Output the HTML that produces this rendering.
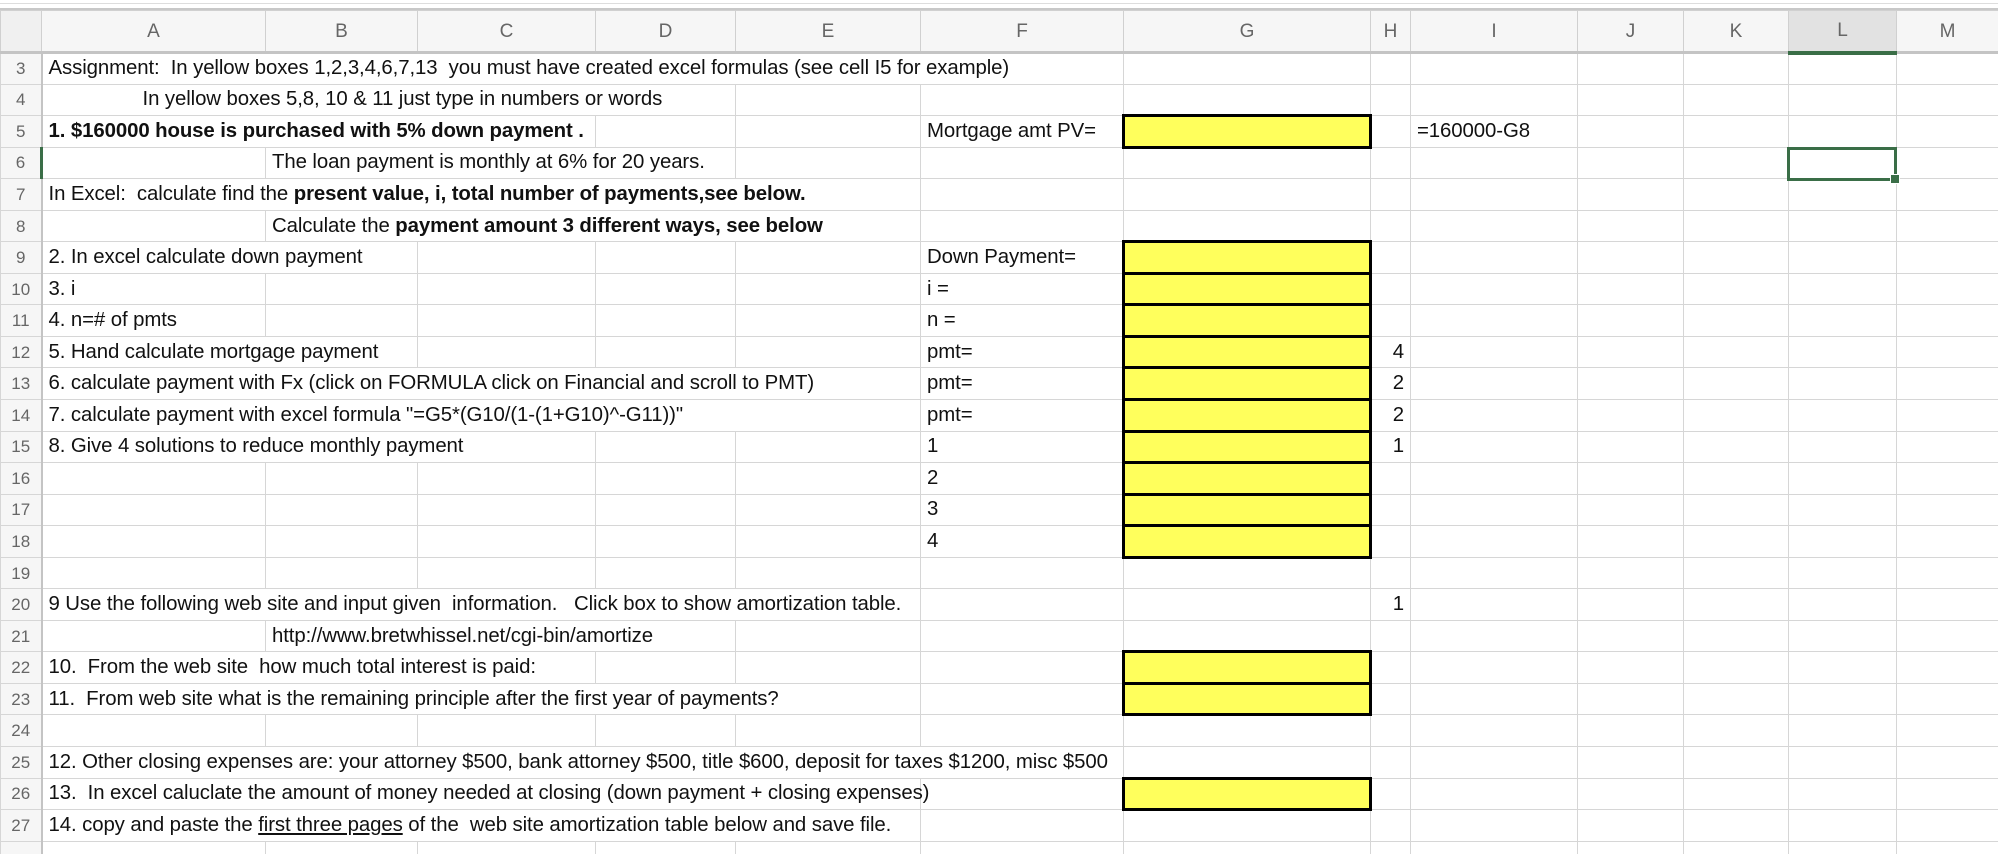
<!DOCTYPE html>
<html><head><meta charset="utf-8"><style>
html,body{margin:0;width:1998px;height:854px;overflow:hidden}
body{background:#fff;font-family:"Liberation Sans",sans-serif;position:relative}
.top{position:absolute;left:0;top:0;width:1998px;height:10px;background:#fff;border-bottom:2px solid #c8c8c8;box-sizing:border-box}
.top:before{content:"";position:absolute;left:0;top:3px;width:1998px;height:1px;background:#ddd}
table{position:absolute;left:0;top:10px;border-collapse:collapse;table-layout:fixed;width:1998px}
td{border:1px solid #d6d6d6;height:31.55px;padding:0 0 0 6px;font-size:20.4px;color:#111;white-space:nowrap;overflow:visible;box-sizing:border-box;line-height:19px;letter-spacing:-0.1px}
tr.h td{height:42px;background:#f6f6f6;color:#666;text-align:center;font-size:19px;border-color:#d0d0d0;border-bottom:3px solid #c4c4c4;padding:0;letter-spacing:0}
td.n{background:#f6f6f6;color:#666;text-align:center;padding:0;border-right:2px solid #c4c4c4;font-size:17px;letter-spacing:0}
td.y{background:#ffff5c;border:3px solid #000}
td.r{text-align:right;padding-right:6px}
b{font-weight:bold}
.sel{position:absolute;left:1787px;top:147px;width:110px;height:34px;border:3px solid #3a6e47;box-sizing:border-box}
.hd{position:absolute;right:-6px;bottom:-6px;width:8px;height:8px;background:#3a6e47;border:1px solid #fff}
</style></head><body>
<div class="top"></div>
<table>
<colgroup><col style="width:41px"><col style="width:224px"><col style="width:152px"><col style="width:178px"><col style="width:140px"><col style="width:185px"><col style="width:203px"><col style="width:247px"><col style="width:40px"><col style="width:167px"><col style="width:106px"><col style="width:105px"><col style="width:108px"><col style="width:102px"></colgroup>
<tr class="h"><td style="background:#f0f0f0"></td><td>A</td><td>B</td><td>C</td><td>D</td><td>E</td><td>F</td><td>G</td><td>H</td><td>I</td><td>J</td><td>K</td><td style="background:#e2e2e2;border-bottom:4px solid #3a6e47">L</td><td>M</td></tr>
<tr><td class="n">3</td><td colspan="6">Assignment:&nbsp; In yellow boxes 1,2,3,4,6,7,13&nbsp; you must have created excel formulas (see cell I5 for example)</td><td></td><td></td><td></td><td></td><td></td><td></td><td></td></tr>
<tr><td class="n">4</td><td colspan="4" style="padding-left:100px">In yellow boxes 5,8, 10 &amp; 11 just type in numbers or words</td><td></td><td></td><td></td><td></td><td></td><td></td><td></td><td></td><td></td></tr>
<tr><td class="n">5</td><td colspan="3"><b>1. $160000 house is purchased with 5% down payment .</b></td><td></td><td></td><td>Mortgage amt PV=</td><td class="y"></td><td></td><td>=160000-G8</td><td></td><td></td><td></td><td></td></tr>
<tr><td class="n" style="border-right:3px solid #3a6e47">6</td><td></td><td colspan="3">The loan payment is monthly at 6% for 20 years.</td><td></td><td></td><td></td><td></td><td></td><td></td><td></td><td></td><td></td></tr>
<tr><td class="n">7</td><td colspan="5">In Excel:&nbsp; calculate find the <b>present value, i, total number of payments,see below.</b></td><td></td><td></td><td></td><td></td><td></td><td></td><td></td><td></td></tr>
<tr><td class="n">8</td><td></td><td colspan="4">Calculate the <b>payment amount 3 different ways, see below</b></td><td></td><td></td><td></td><td></td><td></td><td></td><td></td><td></td></tr>
<tr><td class="n">9</td><td colspan="2">2. In excel calculate down payment</td><td></td><td></td><td></td><td>Down Payment=</td><td class="y"></td><td></td><td></td><td></td><td></td><td></td><td></td></tr>
<tr><td class="n">10</td><td>3. i</td><td></td><td></td><td></td><td></td><td>i =</td><td class="y"></td><td></td><td></td><td></td><td></td><td></td><td></td></tr>
<tr><td class="n">11</td><td>4. n=# of pmts</td><td></td><td></td><td></td><td></td><td>n =</td><td class="y"></td><td></td><td></td><td></td><td></td><td></td><td></td></tr>
<tr><td class="n">12</td><td colspan="2">5. Hand calculate mortgage payment</td><td></td><td></td><td></td><td>pmt=</td><td class="y"></td><td class="r">4</td><td></td><td></td><td></td><td></td><td></td></tr>
<tr><td class="n">13</td><td colspan="5">6. calculate payment with Fx (click on FORMULA click on Financial and scroll to PMT)</td><td>pmt=</td><td class="y"></td><td class="r">2</td><td></td><td></td><td></td><td></td><td></td></tr>
<tr><td class="n">14</td><td colspan="5">7. calculate payment with excel formula "=G5*(G10/(1-(1+G10)^-G11))"</td><td>pmt=</td><td class="y"></td><td class="r">2</td><td></td><td></td><td></td><td></td><td></td></tr>
<tr><td class="n">15</td><td colspan="3">8. Give 4 solutions to reduce monthly payment</td><td></td><td></td><td>1</td><td class="y"></td><td class="r">1</td><td></td><td></td><td></td><td></td><td></td></tr>
<tr><td class="n">16</td><td></td><td></td><td></td><td></td><td></td><td>2</td><td class="y"></td><td></td><td></td><td></td><td></td><td></td><td></td></tr>
<tr><td class="n">17</td><td></td><td></td><td></td><td></td><td></td><td>3</td><td class="y"></td><td></td><td></td><td></td><td></td><td></td><td></td></tr>
<tr><td class="n">18</td><td></td><td></td><td></td><td></td><td></td><td>4</td><td class="y"></td><td></td><td></td><td></td><td></td><td></td><td></td></tr>
<tr><td class="n">19</td><td></td><td></td><td></td><td></td><td></td><td></td><td></td><td></td><td></td><td></td><td></td><td></td><td></td></tr>
<tr><td class="n">20</td><td colspan="5">9 Use the following web site and input given&nbsp; information.&nbsp;&nbsp; Click box to show amortization table.</td><td></td><td></td><td class="r">1</td><td></td><td></td><td></td><td></td><td></td></tr>
<tr><td class="n">21</td><td></td><td colspan="3">http://www.bretwhissel.net/cgi-bin/amortize</td><td></td><td></td><td></td><td></td><td></td><td></td><td></td><td></td><td></td></tr>
<tr><td class="n">22</td><td colspan="3">10.&nbsp; From the web site&nbsp; how much total interest is paid:</td><td></td><td></td><td></td><td class="y"></td><td></td><td></td><td></td><td></td><td></td><td></td></tr>
<tr><td class="n">23</td><td colspan="5">11.&nbsp; From web site what is the remaining principle after the first year of payments?</td><td></td><td class="y"></td><td></td><td></td><td></td><td></td><td></td><td></td></tr>
<tr><td class="n">24</td><td></td><td></td><td></td><td></td><td></td><td></td><td></td><td></td><td></td><td></td><td></td><td></td><td></td></tr>
<tr><td class="n">25</td><td colspan="6">12. Other closing expenses are: your attorney $500, bank attorney $500, title $600, deposit for taxes $1200, misc $500</td><td></td><td></td><td></td><td></td><td></td><td></td><td></td></tr>
<tr><td class="n">26</td><td colspan="5">13.&nbsp; In excel caluclate the amount of money needed at closing (down payment + closing expenses)</td><td></td><td class="y"></td><td></td><td></td><td></td><td></td><td></td><td></td></tr>
<tr><td class="n">27</td><td colspan="5">14. copy and paste the <u>first three pages</u> of the&nbsp; web site amortization table below and save file.</td><td></td><td></td><td></td><td></td><td></td><td></td><td></td><td></td></tr>
<tr><td class="n"></td><td></td><td></td><td></td><td></td><td></td><td></td><td></td><td></td><td></td><td></td><td></td><td></td><td></td></tr>
</table>
<div class="sel"><div class="hd"></div></div>
</body></html>
